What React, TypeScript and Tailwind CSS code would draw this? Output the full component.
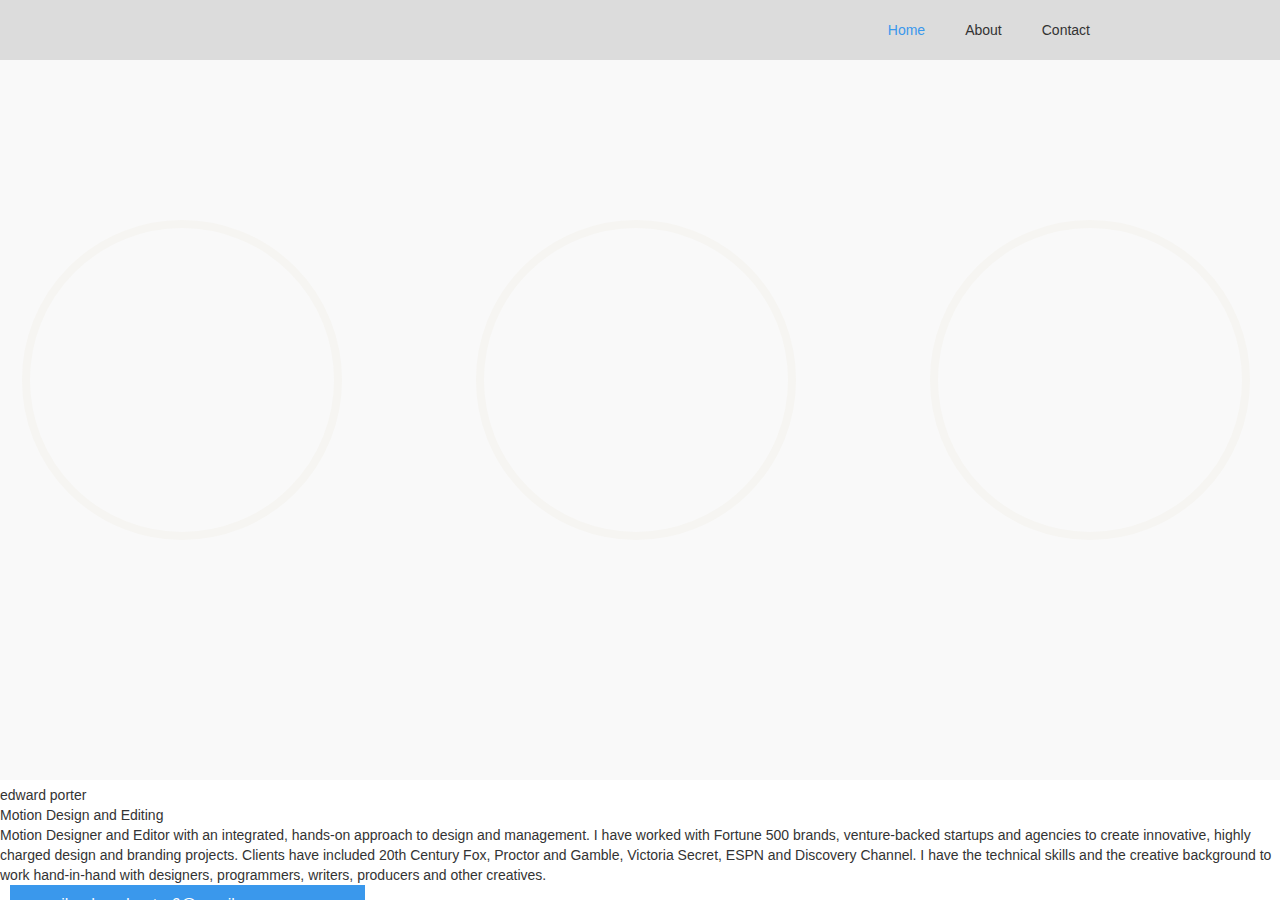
import React from 'react';

const navLinks = [
  { label: 'Home', active: true },
  { label: 'About', active: false },
  { label: 'Contact', active: false },
];

function Ring() {
  return (
    <svg width="320" height="320" viewBox="0 0 320 320" className="shrink-0">
      <circle cx="160" cy="160" r="156" fill="none" stroke="#f6f5f2" strokeWidth="8" />
    </svg>
  );
}

export default function App() {
  return (
    <div className="min-h-screen bg-white font-['Liberation_Sans',Arial,sans-serif] text-[14px] leading-5 text-[#333]">
      {/* Header */}
      <header className="h-[60px] bg-[#dcdcdc] flex items-center justify-end pr-[170px]">
        {navLinks.map((link) => (
          <a
            key={link.label}
            href="#"
            className={link.active ? 'px-5 text-[#3a98ec]' : 'px-5 text-[#333]'}
          >
            {link.label}
          </a>
        ))}
      </header>

      {/* Hero */}
      <section className="h-[720px] bg-[#f9f9f9] flex items-start justify-between pt-[160px] pl-[22px] pr-[30px]">
        <Ring />
        <Ring />
        <Ring />
      </section>

      {/* About */}
      <div className="pt-[5px]">
        <div>edward porter</div>
        <div>Motion Design and Editing</div>
        <p>
          Motion Designer and Editor with an integrated, hands-on approach to design and management. I have worked with
          Fortune 500 brands, venture-backed startups and agencies to create innovative, highly charged design and
          branding projects. Clients have included 20th Century Fox, Proctor and Gamble, Victoria Secret, ESPN and
          Discovery Channel. I have the technical skills and the creative background to work hand-in-hand with
          designers, programmers, writers, producers and other creatives.
        </p>
        <a
          href="#"
          className="ml-[10px] block w-[355px] bg-[#3a98ec] text-white px-[20px] py-[10px] text-[16px]"
        >
          email: edwardporter6@gmail.com
        </a>
      </div>
    </div>
  );
}
